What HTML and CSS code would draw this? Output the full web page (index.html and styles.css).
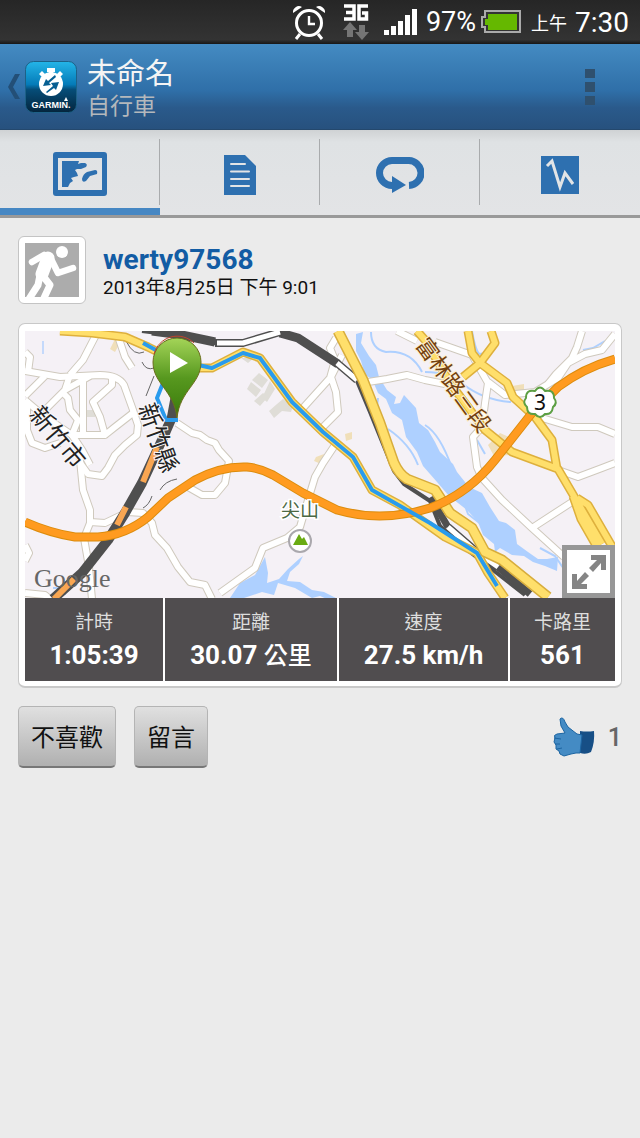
FILE: index.html
```html
<!DOCTYPE html>
<html lang="zh-Hant">
<head>
<meta charset="utf-8">
<meta name="viewport" content="width=device-width, initial-scale=1">
<title>未命名</title>
<link rel="stylesheet" href="styles.css">
</head>
<body>
<div class="status-bar">
  <svg class="alarm" viewBox="0 0 34 36" width="34" height="36" fill="none" stroke="#fff">
    <circle cx="17" cy="19" r="12.5" stroke-width="3"/>
    <path d="M17 12v8h6" stroke-width="2.4"/>
    <path d="M8 30l-4 5M26 30l4 5" stroke-width="3"/>
    <path d="M1 9a6 6 0 0 1 9-6zM33 9a6 6 0 0 0-9-6z" fill="#fff" stroke="none"/>
  </svg>
  <svg class="network" viewBox="0 0 26 36" width="26" height="36" aria-label="3G">
    <path d="M1 2h10v13H1M3 8.500h8M25 2H16v13h7.500V9H19" fill="none" stroke="#fff" stroke-width="3.500"/>
    <path d="M7 18l7 8h-4v7H4v-7H0zM19 36l-7-8h4v-7h6v7h4z" fill="#757575"/>
  </svg>
  <svg class="signal" viewBox="0 0 34 28" width="34" height="28" fill="#fff">
    <path d="M0 22h5v5H0zM7 18h5v9H7zM14 13h5v14h-5zM21 7h5v20h-5zM28 1h5v26h-5z"/>
  </svg>
  <span class="percent">97%</span>
  <svg class="battery" viewBox="0 0 40 24" width="40" height="24">
    <path d="M4 1h35v21H4v-5H1V7h3z" fill="#333" stroke="#aaa" stroke-width="2"/>
    <path d="M7 4h29v16H7v-5H4V9h3z" fill="#65b800"/>
  </svg>
  <span class="ampm">上午</span>
  <time class="clock">7:30</time>
</div>

<header class="app-bar">
  <a class="home" href="#" aria-label="返回">
    <svg class="chevron" viewBox="0 0 12 26" width="12" height="26"><path d="M7 0h5L5 13l7 12H7L0 13z" fill="#234f77"/></svg>
    <svg viewBox="0 0 52 52" width="52" height="52">
      <defs><linearGradient id="logo-fill" x2="0" y2="1"><stop stop-color="#24b5e8"/><stop offset=".45" stop-color="#057bb8"/><stop offset=".55" stop-color="#064d78"/><stop offset="1" stop-color="#04253d"/></linearGradient></defs>
      <rect x=".5" y=".5" width="51" height="51" rx="8" fill="url(#logo-fill)" stroke="#1d6187"/>
      <circle cx="26" cy="23" r="12" fill="#fff"/>
      <path d="M22 7h8v4h-2v3h-4v-3h-2zM14 13l3-3 3 3-3 3zM38 13l-3-3-3 3 3 3z" fill="#fff"/>
      <path d="M30 14l-7 6-2-2-3 7 8-1-2-2 7-6zM21 31l7-6-2-3 8-1-3 8-2-2-7 5z" fill="#075f92"/>
      <text class="brand" x="26" y="47" text-anchor="middle" fill="#fff">GARMIN.</text>
      <path d="M41 36l2 4h-4z" fill="#fff"/>
    </svg>
  </a>
  <div class="titles">
    <h1>未命名</h1>
    <p>自行車</p>
  </div>
  <button class="overflow" type="button" aria-label="更多選項">
    <svg viewBox="0 0 10 38" width="10" height="38" fill="#2f506e"><path d="M0 1h10v9H0zM0 14h10v10H0zM0 28h10v9H0z"/></svg>
  </button>
</header>

<nav class="tabs">
  <a class="tab active" href="#" aria-label="地圖">
    <svg viewBox="0 0 54 44" width="54" height="44" fill="#2e70b0">
      <path fill-rule="evenodd" d="M3 0h48a3 3 0 0 1 3 3v38a3 3 0 0 1-3 3H3a3 3 0 0 1-3-3V3a3 3 0 0 1 3-3zm2 6v32h44V6z"/>
      <path d="M9 9h17l-1 3 3-1h4q3 1 1 4l-5 2h-4l-2 1 2 3 1 3-4 1-3 1 2 3-3 2-2 4H9zM42 18q3 0 2 4l-7 2-4 5q-4 2-4-2 1-5 5-7z"/>
    </svg>
  </a>
  <a class="tab" href="#" aria-label="詳細資料">
    <svg viewBox="0 0 32 40" width="32" height="40"><path d="M0 0h21l11 11v29H0z" fill="#2e70b0"/><path d="M7 9h14M7 16.500h18M7 24h18M7 31h18" stroke="#e2e4e6" stroke-width="2" stroke-linecap="round"/></svg>
  </a>
  <a class="tab" href="#" aria-label="圈數">
    <svg viewBox="0 0 48 36" width="48" height="36"><path d="M17 28.500h-1a12.500 12.500 0 0 1 0-25h16a12.500 12.500 0 0 1 1 25" fill="none" stroke="#2e70b0" stroke-width="7"/><path d="M16 19l14 9-14 8z" fill="#2e70b0"/></svg>
  </a>
  <a class="tab" href="#" aria-label="圖表">
    <svg viewBox="0 0 38 38" width="38" height="38"><path d="M0 0h38v38H0z" fill="#2e70b0"/><path d="M6 10l5-5 8 26 5-14 8 11" fill="none" stroke="#e2e4e6" stroke-width="3"/></svg>
  </a>
</nav>

<main>
  <section class="profile">
    <svg class="avatar" viewBox="0 0 54 54" width="54" height="54">
      <path d="M0 0h54v54H0z" fill="#acacac"/>
      <g fill="none" stroke="#fff" stroke-linecap="round" stroke-linejoin="round">
        <circle cx="37" cy="9" r="6" fill="#fff" stroke="none"/>
        <path d="M19 12L7 19" stroke-width="6.500"/>
        <path d="M23 15L17 31" stroke-width="13"/>
        <path d="M25 14l8 16 15-5" stroke-width="6.500"/>
        <path d="M15 32L13 42 4 56M18 33l7 9-6 13" stroke-width="7"/>
      </g>
    </svg>
    <div class="who">
      <h2><a href="#">werty97568</a></h2>
      <time>2013年8月25日 下午 9:01</time>
    </div>
  </section>

  <section class="card">
    <div class="map-box">
      <svg class="map" viewBox="25 331 590 267" preserveAspectRatio="xMidYMid slice" role="img" aria-label="路線地圖">
        <defs>
          <linearGradient id="pin-fill" x2="0" y2="1"><stop stop-color="#a4d458"/><stop offset=".5" stop-color="#57981f"/><stop offset="1" stop-color="#397a0b"/></linearGradient>
          <g id="streets">
            <path d="M25 371l35 6 40-2q18 0 24 10l9 25 5 15-1 10-12 10-10 10-7 13-6 8-14-2-10-14"/>
            <path d="M98 331L83 360 70 375M45 376L25 396M70 375l-5 15M90 376L65 390 47 408M118 336l7 21 7 11M83 378v56"/>
            <path d="M112 379v6L93 402l7 15 5 18H72l6-15-8-10-2-12-5-5M133 413l-18 14-10 8M25 400l20 17 27 18M27 400v30l5 13 13 5 15-5M25 352l5 5-2 15"/>
            <path d="M177 423l15 10 8 2 7 5 8 3 4 7 10 11-4 22-10 12h-13l-14-8M72 435l10 15 8 15"/>
            <path d="M78 445l2 15 3 30 7 20v13l-6 15 5 29 3 32M90 522l15 1 23-11 15 1 9 10 3 12 12 13 11 19 12 15 15 3 7 14M25 593l20 2 12 10M25 545l4 8-4 8"/>
            <path d="M303 408l27-30 5-18-5-12 6-10M342 355l-11 22 5 15 2 20-17 17M335 445l-12 18-8 14-7 23-8 27-13 11-24 10-8 20-35 25"/>
            <path d="M368 382l19-3 20-4 18 5 20 4M435 342l37 13 16 28-3 20-3 24-9 10 4 30 5 11 20 22 30 28 32 29M488 382l17 13 30-3 23-14 10-15 17-9 17-4 13-16"/>
            <path d="M582 331l-5 16-5 11-16 16-8 10M542 418l30 9 26 0 17 7M558 470l20 7 24-9 13-5M532 528l40-26M397 331l20 10"/>
          </g>
          <g id="avenues">
            <path d="M60 331l32 2 33 4 23 10 30 15 20 6h14l31-16 17 6 32 44 31 30 30 25 19 33 28 15 45 32 32 16 11 20 17 25"/>
            <path d="M417 331l8 9 25 43 35 47 27 22 46 17 17 29 27 46M468 331l4 22 8 10 27 20 6 14 22 20 17 23 5 29M491 331l4 12-15 20-17 14M577 498l11 7 25 43M573 496l8 23 16 28"/>
          </g>
          <path id="valley-road" d="M338 331l25 49 17 43 14 40q5 11 13 16l28 11 15 23 22 15 13 24 17 8 46 37"/>
          <path id="highway" d="M25 522q25 11 50 15h23q28-2 50-20l20-19 27-18q26-14 52-13 13 1 26 8l30 18 34 17q45 13 93-2 38-14 65-48l37-47 26-26q25-19 57-28"/>
        </defs>
        <path d="M25 331h590v267H25z" fill="#f5f1f6"/>
        <path d="M87 410h8v7h-8z" fill="#dfddd7"/>
        <path d="M43 341v13" stroke="#c4d9fb" stroke-width="2"/>
        <g fill="#dfddd7">
          <path d="M259 373l9 7-6 8-10-8zM251 382l10 8-5 7-9-8zM270 381l5 8-8 13-5-4zM263 393l5 4-8 9-6-5zM241 358l7 5 6-5zM283 399l10 7-2 6-9-1-8 7-5-7 8-7z"/>
        </g>
        <path d="M345 434l7-2v7l-6 2zM316 457l8-3-3 10-7-3zM110 349l5-10 5 4-5 9zM512 386l12-2v6l-9 4zM488 445l12-12 13 6-3 16-16 1z" fill="#f0dfb9"/>
        <g fill="#aed0ff">
          <path d="M356 334l7-2-2 11 8 13 7 9 3 12 8 13 9 7-2 7 6-1 4-8 12 13 3 15 9 7 7 12 5 10 13 12 4 8 12 15 13 6 8 14 9 14 7 2 9 7 2 14 11 8 10 7 9 0 11-2-1 14-12-5-12-4-9-6-12-1-12-7-5 4-1-8-11-9-5-13-11-12-18-14-12-14-14-16-6-14-11-15-4-17-10-7-6-14-8-6-6-14-7-4-4-14-5-10z"/>
          <path d="M230 598l10-15 15-8 10-18 3 16-1 10 12-4 9-10 11-10 4-3-4 8-9 8-3 9 13 1 12 8 12 2 12 6 10 0-10 5-16-7-8 2-17-10-17-5-4 12-12-3-18 6z"/>
        </g>
        <g fill="none" stroke="#aed0ff" stroke-width="2">
          <path d="M371 332q0 17 15 20 25-2 36 20M378 398l-2 18M388 429q22 15 30 36M472 331q5 28 10 22M425 372q25 0 38 12 20 16 48 18M425 425q15 9 27 43M463 500l5 14 14 11M477 470l-5-25M583 350l10-2 12-7M540 548l15 8 15 22M65 595v-13M53 588h10M477 440l8 14"/>
        </g>
        <g fill="none" stroke-linejoin="round">
          <use href="#streets" stroke="#cfc9bd" stroke-width="8"/>
          <use href="#streets" stroke="#fff" stroke-width="6"/>
          <g stroke="#666" stroke-width="1"><path d="M126 341q8 16 18 11M142 362q4 9 12 6M154 376l-8 20M160 490q5-9 17-11M143 508q6-3 9-12"/></g>
          <path d="M142 331l40 5 33 7h28l37-11 18 5 39 26 20 18 13 31 24 59 10 13 26 17 10 25 30 26 55 43" stroke="#4f4f4f" stroke-width="4"/>
          <path d="M152 331l30 4 33 7M280 333l18 5 40 26" stroke="#4f4f4f" stroke-width="9"/>
          <path d="M215 343h28l37-11M337 363l20 17M448 527l30 26 20 14" stroke="#4f4f4f" stroke-width="8"/>
          <path d="M431 497l7 13 10 17M498 567l32 27" stroke="#4f4f4f" stroke-width="7"/>
          <path d="M217 343h26l37-11M337 363l20 17M448 527l30 26 20 14" stroke="#fff" stroke-width="5"/>
          <path d="M177 390l-5 27-10 23-20 43-17 30-17 27-26 33-29 26" stroke="#4f4f4f" stroke-width="10"/>
          <path d="M157 447l-14 35M126 507l-9 18M74 579l-20 20" stroke="#f9a652" stroke-width="6"/>
          <use href="#avenues" stroke="#deb03d" stroke-width="9"/>
          <use href="#avenues" stroke="#ffdf6b" stroke-width="6"/>
          <use href="#valley-road" stroke="#d8ad3c" stroke-width="11"/>
          <use href="#valley-road" stroke="#ffdf6b" stroke-width="8"/>
          <use href="#highway" stroke="#dc8c0d" stroke-width="9"/>
          <use href="#highway" stroke="#ff9b20" stroke-width="7"/>
          <path d="M143 343l20 11 35 11 14 3 31-15 17 5 32 44 31 30 30 25 19 33 58 33 47 30 20 33M163 383l-6 15 9 22h12" stroke="#299bed" stroke-width="4"/>
        </g>
        <g class="road-name">
          <text transform="translate(28 415) rotate(50)">新竹市</text>
          <text transform="translate(138 407) rotate(70)">新竹縣</text>
          <text class="brown" transform="translate(415 345) rotate(54)">富林路三段</text>
        </g>
        <text class="peak-name" x="300" y="517" text-anchor="middle">尖山</text>
        <circle cx="300" cy="541" r="11" fill="#fff" stroke="#aaa8ad" stroke-width="2"/>
        <path d="M293 545l6-11 3 5 2-2 4 8z" fill="#69ab12"/>
        <path d="M535 391q5-7 10 0 9-2 9 7 4 5-1 9-1 8-8 7-5 6-10 0-8 1-8-7-5-4-1-9 0-9 9-7z" fill="#fff" stroke="#5c9f43" stroke-width="2"/>
        <text class="route-number" x="540" y="410" text-anchor="middle">3</text>
        <path d="M177 418C174 390 153 384 153 362a24 24 0 0 1 48 0c0 22-21 28-24 56z" fill="url(#pin-fill)" stroke="#6b6d1d"/>
        <path d="M154 354a24 24 0 0 1 40-11" fill="none" stroke="#c1442c" stroke-width="1"/>
        <path d="M170 352l18 11-18 10z" fill="#fff"/>
        <text class="attribution" x="34" y="587">Google</text>
      </svg>
      <button class="expand" type="button" aria-label="放大地圖">
        <svg viewBox="0 0 36 36" width="36" height="36" fill="#858585"><path d="M20 1h15v15h-5V9l-8 9-4-4 8-8h-6zM16 35H1V20h5v7l8-9 4 4-8 8h6z"/></svg>
      </button>
    </div>
    <dl class="stats">
      <div><dt>計時</dt><dd>1:05:39</dd></div>
      <div><dt>距離</dt><dd>30.07 <span class="unit">公里</span></dd></div>
      <div><dt>速度</dt><dd>27.5 km/h</dd></div>
      <div><dt>卡路里</dt><dd>561</dd></div>
    </dl>
  </section>

  <section class="actions">
    <button class="action" type="button">不喜歡</button>
    <button class="action" type="button">留言</button>
    <div class="likes">
      <svg viewBox="0 0 42 40" width="42" height="40">
        <path d="M27 14q7 1 14 0 1 11-3 21-5 3-11 1z" fill="#174f86"/>
        <path d="M7 2q3-3 5 3l3 5 9 7 5 1-2 18-4 0-5 1-7 2-4-2-1-3-3-2 0-4-2-3 1-4q-2-3 2-4l8-1-4-7z" fill="#448bc4" stroke="#1c65a2" stroke-width="1"/>
        <path d="M1 21l7 1M2 27l5 0M4 32l5-1" stroke="#1c65a2"/>
      </svg>
      <span>1</span>
    </div>
  </section>
</main>
</body>
</html>
```
FILE: styles.css
```css
* { box-sizing: border-box; }

body {
  margin: 0;
  background: #ebebeb;
  color: #111;
  font-family: Roboto, "Noto Sans CJK TC", sans-serif;
}

h1, h2, p, dl, dd { margin: 0; font-weight: 400; }
a { color: inherit; text-decoration: none; }
button { font: inherit; cursor: pointer; }
svg { display: block; flex: none; }

.status-bar {
  display: flex;
  align-items: center;
  justify-content: flex-end;
  height: 44px;
  padding-right: 11px;
  background: linear-gradient(#262626, #333 90%, #171717);
  color: #fff;
}
.alarm { margin-right: 17px; }
.network { margin-right: 15px; }
.signal { margin-right: 8px; }
.percent { font-size: 27px; }
.battery { margin: 0 10px 0 5px; }
.ampm { margin-right: 8px; font-size: 18px; }
.clock { font-size: 28px; }

.app-bar {
  display: flex;
  align-items: center;
  height: 86px;
  padding: 0 12px 0 8px;
  border-bottom: 1px solid #24486d;
  background: linear-gradient(#448bc2, #2f6fa8 55%, #2a5a8b 75%, #27517e);
}
.home { display: flex; align-items: center; gap: 5px; }
.brand { font: 700 9px "Liberation Sans", sans-serif; }
.titles { flex: 1; padding: 4px 0 0 10px; }
.titles h1 { color: #f4f4f4; font-size: 29px; line-height: 36px; }
.titles p { color: #b4b8bc; font-size: 23px; line-height: 29px; }
.overflow {
  display: grid;
  place-items: center;
  width: 76px;
  height: 80px;
  padding: 0;
  border: 0;
  background: none;
}

.tabs {
  display: grid;
  grid-template-columns: repeat(4, 1fr);
  height: 88px;
  border-bottom: 3px solid #999;
  background: linear-gradient(#cfd2d4, #dfe2e4 12px, #e3e4e6);
}
.tab {
  position: relative;
  display: grid;
  place-items: center;
  padding-top: 4px;
}
.tab.active { border-bottom: 7px solid #4687c3; padding-top: 10px; }
.tab + .tab::before {
  content: "";
  position: absolute;
  left: -1px;
  top: 9px;
  bottom: 10px;
  width: 1px;
  background: #a9abad;
}

main { padding: 18px; }

.profile { display: flex; align-items: center; gap: 17px; }
.avatar {
  box-sizing: content-box;
  padding: 6px;
  border: 1px solid #c4c4c4;
  border-radius: 6px;
  background: #fff;
}
.who { padding-top: 4px; }
.who h2 { color: #125ca4; font-size: 28px; line-height: 32px; }
.who h2 a { font-weight: 700; }
.who time { display: block; font-size: 19px; line-height: 24px; }

.card {
  margin-top: 19px;
  padding: 7px 6px 5px;
  border: 1px solid #c8c8c8;
  border-bottom-width: 2px;
  border-radius: 7px;
  background: #fff;
}
.map-box { position: relative; }
.map { width: 100%; aspect-ratio: 590 / 267; }
.road-name {
  fill: #222;
  font: 24px "Noto Sans CJK TC", sans-serif;
  paint-order: stroke;
  stroke: #f9f7f9;
  stroke-width: 2px;
}
.road-name .brown { fill: #73400e; stroke: #fcefd0; font-size: 22px; }
.peak-name {
  fill: #4b6844;
  font: 19px "Noto Sans CJK TC", sans-serif;
  paint-order: stroke;
  stroke: #fff;
  stroke-width: 3px;
}
.route-number { fill: #111; font: 21px "Noto Sans", sans-serif; }
.attribution { fill: #666; font: 26px "Liberation Serif", serif; }
.expand {
  position: absolute;
  right: 0;
  bottom: 0;
  display: grid;
  place-items: center;
  width: 53px;
  height: 53px;
  padding: 0;
  border: 5px solid #979797;
  background: #fff;
}

.stats {
  display: grid;
  grid-template-columns: 138fr 172fr 169fr 105fr;
  gap: 2px;
  text-align: center;
}
.stats div { padding: 10px 0 8px; background: #504d4f; }
.stats dt { color: #ddd; font-size: 19px; line-height: 30px; }
.stats dd { color: #fff; font-size: 26px; line-height: 34px; font-weight: 700; }
.stats .unit { font-size: 24px; font-weight: 500; }

.actions { display: flex; align-items: center; gap: 18px; margin-top: 18px; }
.action {
  height: 62px;
  padding: 0 12px 2px;
  border: 1px solid #b4b4b4;
  border-bottom: 2px solid #777;
  border-radius: 5px;
  background: linear-gradient(#e0e0e0, #b0b0b0);
  color: #111;
  font-size: 24px;
}
.likes {
  display: flex;
  align-items: center;
  gap: 13px;
  margin-left: auto;
  color: #666;
  font-size: 25px;
  font-weight: 500;
}
```
